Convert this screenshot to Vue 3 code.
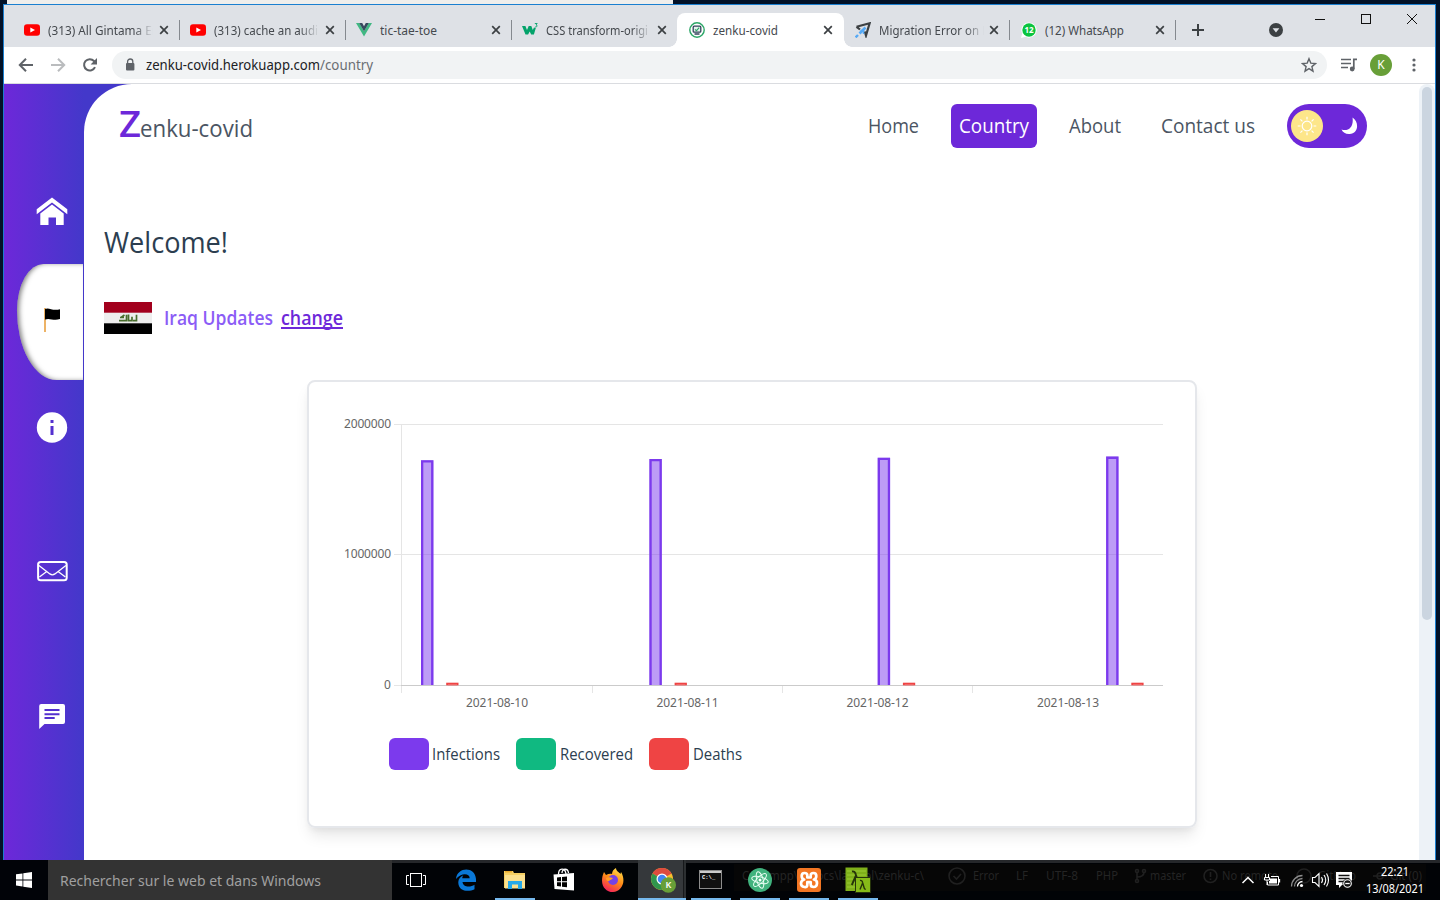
<script setup>
import { h } from 'vue'

// Single line of text set to a fixed advance width, optically centred on its capitals.
const FitText = (props) => {
  const s = Number(props.size)
  return h('svg', { width: props.w, height: s * 1.4, class: 'fit' }, [
    h('text', {
      x: 0,
      y: Math.round(s * 1.055),
      'font-size': s,
      fill: 'currentColor',
      textLength: props.w,
      lengthAdjust: 'spacingAndGlyphs'
    }, props.t)
  ])
}
FitText.props = ['t', 'w', 'size']

const tabs = [
  { t: '(313) All Gintama En', w: 111, icon: 'yt', fade: true },
  { t: '(313) cache an audi', w: 104, icon: 'yt', fade: true },
  { t: 'tic-tae-toe', w: 57, icon: 'vue' },
  { t: 'CSS transform-origi', w: 102, icon: 'w3', fade: true, noSep: true },
  { t: 'zenku-covid', w: 65, icon: 'covid', active: true, noSep: true },
  { t: 'Migration Error on L', w: 109, icon: 'plane', fade: true },
  { t: '(12) WhatsApp', w: 79, icon: 'wa' }
]
const links = [
  { t: 'Home', w: 51 },
  { t: 'Country', w: 70, active: true },
  { t: 'About', w: 52 },
  { t: 'Contact us', w: 94 }
]
const bars = [
  { x: 421, y: 460.3, d: '2021-08-10', l: 466 },
  { x: 649.4, y: 459, d: '2021-08-11', l: 656.5 },
  { x: 877.7, y: 457.8, d: '2021-08-12', l: 846.5 },
  { x: 1106.1, y: 456.6, d: '2021-08-13', l: 1037 }
]
const legend = [
  { t: 'Infections', w: 68, c: 'violet' },
  { t: 'Recovered', w: 73, c: 'green' },
  { t: 'Deaths', w: 49, c: 'red' }
]
const ghosts = [
  { t: 'C:\\xampp\\htdocs\\laravel\\zenku-c\\', x: 742, w: 182 },
  { t: 'Error', x: 973, w: 26 },
  { t: 'LF', x: 1016, w: 12 },
  { t: 'UTF-8', x: 1046, w: 32 },
  { t: 'PHP', x: 1096, w: 22 },
  { t: 'master', x: 1150, w: 36 },
  { t: 'No remote', x: 1222, w: 56 },
  { t: 'GitHub', x: 1318, w: 38 },
  { t: 'Git (0)', x: 1390, w: 32 }
]
const rays = [0, 45, 90, 135, 180, 225, 270, 315]
</script>

<template>
  <div class="screen">
    <div class="behind"></div>
    <div class="window">
      <div class="tabstrip">
        <div class="tabs">
          <div v-for="(b, i) in tabs" :key="i" class="tab" :class="{ active: b.active, sep: !b.noSep }">
            <svg class="fav" width="16" height="16" viewBox="0 0 16 16">
              <template v-if="b.icon === 'yt'">
                <rect x="0" y="2.2" width="16" height="11.6" rx="3" fill="#f00" />
                <path d="M6.3 5.4v5.2L11 8z" fill="#fff" />
              </template>
              <template v-else-if="b.icon === 'vue'">
                <path d="M0 1h3.3L8 9.2 12.7 1H16L8 14.6z" fill="#41b883" />
                <path d="M3.2 1h3L8 4.2 9.8 1h3L8 9.3z" fill="#35495e" />
              </template>
              <template v-else-if="b.icon === 'w3'">
                <path d="M0 4h3.400l1.600 4 1.700-4h2.600l1.500 4 1.200-2.400 1.800.4-1.900 6.600h-2.700L7.700 9.400l-1.600 3.200H3.500z" fill="#04a36b" />
                <path d="M12.800 1.500h2.400l-1.200 1.500c1.600.1 1.500 2.200-.9 2" fill="none" stroke="#04a36b" stroke-width=".9" />
              </template>
              <template v-else-if="b.icon === 'covid'">
                <circle cx="8" cy="8" r="7.2" fill="#fff" stroke="#2ca667" stroke-width="1.4" />
                <rect x="4.2" y="4.2" width="7.6" height="6" rx="1" fill="#e7f2ee" stroke="#33425b" stroke-width="1.3" />
                <path d="M5.5 12h5" stroke="#33425b" stroke-width="1.5" />
                <path d="M6 7.3l1.5 1.4 2.7-3" fill="none" stroke="#2ca667" stroke-width="1.1" />
              </template>
              <template v-else-if="b.icon === 'plane'">
                <path d="M1.500 4.800L14.600 1.300 11 13.500 9.800 9.500M1.500 4.800L5 7.500" fill="none" stroke="#3c4043" stroke-width="2.200" />
                <path d="M10.500 5.500L4.500 11.500" stroke="#56a9f5" stroke-width="2.600" /><path d="M5.500 8.500h3v3.500" fill="none" stroke="#56a9f5" stroke-width="1.500" />
                <path d="M3 13L.6 15.400" stroke="#56a9f5" stroke-width="2.400" />
              </template>
              <template v-else>
                <path d="M8 .4a7.6 7.6 0 1 1-3.3 14.4L0 16l1.2-4.6A7.6 7.6 0 0 1 8 .4z" fill="#fff" />
                <circle cx="8" cy="8" r="6.7" fill="#0ac43f" />
                <text x="8" y="11" font-size="8" font-weight="700" text-anchor="middle" fill="#fff">12</text>
              </template>
            </svg>
            <div class="title" :class="{ fade: b.fade }"><FitText :t="b.t" :w="b.w" size="12" /></div>
            <svg class="close" width="10" height="10" viewBox="0 0 10 10"><path d="M1.2 1.2l7.6 7.6M8.8 1.2L1.2 8.8" stroke="#3c4043" stroke-width="1.7" /></svg>
          </div>
        </div>
        <svg class="plus" width="12" height="12" viewBox="0 0 12 12"><path d="M6 0v12M0 6h12" stroke="#3c4043" stroke-width="2" /></svg>
        <svg class="drop" width="14" height="14" viewBox="0 0 14 14"><circle cx="7" cy="7" r="7" fill="#3c4043" /><path d="M3.6 5.2h6.8L7 9.6z" fill="#dee1e6" /></svg>
        <svg class="controls" width="106" height="14" viewBox="0 0 106 14" fill="none" stroke="#111" stroke-width="1">
          <path d="M1 7.5h10" /><rect x="47.5" y="2.5" width="9" height="9" /><path d="M93 2l10 10M103 2L93 12" />
        </svg>
      </div>

      <div class="toolbar">
        <svg class="navicons" width="84" height="20" viewBox="15 55 84 20" fill="none" stroke-width="2">
          <path d="M33 65H20M26 58.8L19.8 65l6.2 6.2" stroke="#5f6368" />
          <path d="M51 65h13M58 58.8l6.2 6.2-6.2 6.2" stroke="#babcbe" />
          <path d="M95 67.2A5.7 5.7 0 1 1 94 61l1.5 1.6" stroke="#5f6368" />
          <path d="M97 58v6.4h-6.4z" fill="#5f6368" />
        </svg>
        <div class="omni">
          <svg width="10" height="14" viewBox="0 0 10 14"><rect x="1" y="5" width="8.4" height="7.6" rx="1" fill="#5f6368" /><path d="M2.6 5.5V3.6a2.6 2.6 0 0 1 5.2 0v2" fill="none" stroke="#5f6368" stroke-width="1.3" /></svg>
          <div class="url"><FitText t="zenku-covid.herokuapp.com" w="174" size="14" /><FitText class="path" t="/country" w="53" size="14" /></div>
          <svg class="star" width="16" height="16" viewBox="0 0 16 16"><path d="M8 1.7l1.8 4.4 4.7.4-3.6 3.1 1.1 4.6L8 11.7l-4 2.5 1.1-4.6-3.6-3.1 4.7-.4z" fill="none" stroke="#5f6368" stroke-width="1.4" /></svg>
        </div>
        <svg class="media" width="17" height="14" viewBox="0 0 17 14"><path d="M0 1.5h10M0 5.5h10M0 9.5h7" stroke="#5f6368" stroke-width="1.7" /><path d="M12.8 11V1.4H16" fill="none" stroke="#5f6368" stroke-width="1.7" /><circle cx="11.2" cy="11" r="2.4" fill="#5f6368" /></svg>
        <div class="avatar">K</div>
        <svg class="dots" width="4" height="14" viewBox="0 0 4 14" fill="#5f6368"><circle cx="2" cy="2" r="1.6" /><circle cx="2" cy="7" r="1.6" /><circle cx="2" cy="12" r="1.6" /></svg>
      </div>

      <div class="viewport">
        <aside class="side">
          <div class="item i1"><svg width="32" height="30" viewBox="36 197 32 30"><path d="M52 197.5l15.300 11.700v5L52 202.5l-15.300 11.700v-5z" fill="#fff" /><path d="M40.300 213.500L52 204.600l11.700 8.900V225H56v-7.500h-7.500v7.500h-8.200z" fill="#fff" /></svg></div>
          <div class="item i2"><svg width="18" height="26" viewBox="43 307 18 26"><path d="M45 308v24" stroke="#e9a040" stroke-width="1.6" /><path d="M45 309c4-2 7 2.2 15 .3v9.8c-7 2-10-1.5-15 .4z" fill="#000" /></svg></div>
          <div class="item i3"><svg width="32" height="32" viewBox="0 0 32 32"><circle cx="16" cy="16.500" r="15.200" fill="#fff" /><path d="M16 9v2.900M16 15v9" stroke="#5430cf" stroke-width="3" /></svg></div>
          <div class="item i4"><svg width="32" height="22" viewBox="35.600 560 32 22" fill="none" stroke="#fff"><rect x="37.700" y="562" width="28.600" height="18.300" rx="2.600" stroke-width="2" /><path d="M38.500 565.500l11 8.400q2.500 1.800 5 0l11-8.400M39 577l7-5.300M65 577l-7-5.300" stroke-width="1.300" /></svg></div>
          <div class="item i5"><svg width="28" height="28" viewBox="38 702 28 28"><path d="M41 704h22q2 0 2 2v16q0 2-2 2H44.500l-5.300 5V706q0-2 2-2z" fill="#fff" /><path d="M44.500 710h15M44.500 714.200h15M44.500 718h10.200" stroke="#5430cf" stroke-width="2" /></svg></div>
        </aside>
        <div class="mainwrap">
          <main class="main">
            <header class="head">
              <svg class="logo" width="134" height="44" viewBox="119 104 134 44">
                <text class="z" x="119" y="137" font-size="36" textLength="22" lengthAdjust="spacingAndGlyphs">Z</text>
                <text class="rest" x="140" y="137" font-size="24" textLength="113" lengthAdjust="spacingAndGlyphs">enku-covid</text>
              </svg>
              <nav class="nav">
                <a v-for="l in links" :key="l.t" class="link" :class="{ on: l.active }"><FitText :t="l.t" :w="l.w" size="20" /></a>
                <div class="toggle">
                  <div class="knob">
                    <svg width="20" height="20" viewBox="-10 -10 20 20" fill="none" stroke="#fff" stroke-width="1.200">
                      <circle r="4.800" /><path v-for="r in rays" :key="r" d="M0 -6.500V-9.300" :transform="`rotate(${r})`" />
                    </svg>
                  </div>
                  <svg width="18" height="18" viewBox="0 0 18 18"><path d="M11.500 0.500c7 4.500 6 16-3 16.500-4 .2-6.500-1.500-8-4.500 7 2.500 12.500-3 11-12z" fill="#fff" /></svg>
                </div>
              </nav>
            </header>
            <h1 class="welcome"><FitText t="Welcome!" w="124" size="30" /></h1>
            <div class="country">
              <svg width="48" height="32" viewBox="0 0 48 32">
                <rect width="48" height="32" fill="#eee" /><rect width="48" height="10.700" fill="#a2001d" /><rect y="21.300" width="48" height="10.700" fill="#000" />
                <path d="M15 18.700h7.500v-6M17 15.500l3.500-2.500M16 15.500h4M24.500 12.500v6.200h3.500v-4M29 18.700h3.500v-6M28 16v2.700" fill="none" stroke="#496e2d" stroke-width="1.700" />
              </svg>
              <FitText class="upd" t="Iraq Updates" w="109" size="20" />
              <a class="change"><FitText t="change" w="62" size="20" /></a>
            </div>
            <section class="card">
              <svg class="chart" width="886" height="340" viewBox="309 382 886 340">
                <path d="M394 424.500H1163M394 554.500H1163M394 685.500H401M401.500 424V693M592.500 686v7M782.500 686v7M972.500 686v7" stroke="#e5e5e5" />
                <path d="M401 685.500H1163" stroke="#cbcbcb" />
                <g class="axis">
                  <text x="344" y="428" textLength="47">2000000</text>
                  <text x="344" y="558" textLength="47">1000000</text>
                  <text x="384" y="689" textLength="7">0</text>
                  <text v-for="b in bars" :key="b.d" :x="b.l" y="707" textLength="62">{{ b.d }}</text>
                </g>
                <g v-for="b in bars" :key="b.x">
                  <rect :x="b.x" :y="b.y" width="12.400" :height="685 - b.y" fill="#7c3aed" fill-opacity=".5" />
                  <path :d="`M${b.x + 1.15} 685V${b.y + 1.15}h10.1V685`" fill="none" stroke="#7c3aed" stroke-width="2.300" />
                  <rect :x="b.x + 25.200" y="682.700" width="12.300" height="2.600" fill="#ef4444" />
                  <rect :x="b.x + 27" y="684.200" width="9" height="1" fill="#f27070" />
                </g>
              </svg>
              <div class="legend">
                <div v-for="l in legend" :key="l.t" class="key"><i :class="l.c"></i><FitText :t="l.t" :w="l.w" size="16" /></div>
              </div>
            </section>
          </main>
        </div>
        <div class="scroll"><div class="thumb"></div></div>
      </div>
    </div>

    <footer class="taskbar">
      <svg class="ghost" width="694" height="28" viewBox="734 863 694 28">
        <rect x="734" y="864" width="692" height="27" fill="#060606" />
        <text v-for="g in ghosts" :key="g.t" :x="g.x" y="880" font-size="12" :textLength="g.w" lengthAdjust="spacingAndGlyphs">{{ g.t }}</text>
        <g fill="none" stroke="#202020" stroke-width="1.600"><circle cx="957" cy="876" r="8" /><path d="M953.500 876l3 3 4.500-5" /><circle cx="1210.500" cy="876" r="6.500" /><path d="M1210.500 872v5M1210.500 878.500v1.500M1137 872v8M1144 872q0 5-7 5" /><circle cx="1137" cy="871" r="1.500" /><circle cx="1144" cy="871" r="1.500" /><circle cx="1137" cy="881" r="1.500" /><circle cx="1304" cy="876" r="7" /><path d="M1373 876h14" /><circle cx="1380" cy="876" r="3" /></g>
      </svg>
      <div class="start"><svg width="16" height="16" viewBox="0 0 16 16" fill="#fff"><path d="M0 2.300l6.500-.9v6.100H0zM7.300 1.200L16 0v7.500H7.300zM0 8.400h6.500v6.100L0 13.600zM7.300 8.400H16V16l-8.700-1.200z" /></svg></div>
      <div class="search"><FitText t="Rechercher sur le web et dans Windows" w="261" size="15" /></div>
      <div class="slot view"><svg width="20" height="14" viewBox="0 0 20 14" fill="none" stroke="#fff"><rect x="4.500" y=".5" width="11" height="13" /><path d="M3 2.500H.5v9H3M17 2.500h2.500v9H17" /></svg></div>
      <div class="slot"><svg width="22" height="22" viewBox="0 0 22 22"><path d="M1 10C2-2 20-3 21 10v3H7.500c.5 5.500 8 5.500 12 2.800v4.400C13 23.500 3 22 3.300 13c.2-3 2-5.500 5-6.700C7.500 7.500 7.300 8.500 7.300 9.300h7.400c0-5.500-9-5.500-13.700.7z" fill="#0a78d7" /></svg></div>
      <div class="slot run"><svg width="22" height="20" viewBox="0 0 22 20"><path d="M0 1h9l1 2h11v15H0z" fill="#f5cf63" /><path d="M1 5h20v13.500H1z" fill="#fbe08e" /><path d="M4 19v-8h14v8h-4v-4.500H8V19z" fill="#27a9e8" /><path d="M1 1h7v1.500H1z" fill="#e8a92d" /></svg></div>
      <div class="slot"><svg width="22" height="24" viewBox="0 0 22 24"><path d="M0.500 6.500L21 5v17.500L1.500 21z" fill="#fff" /><path d="M5.500 6.500C5.500-.5 12-.5 13 6M9 5c0-5 6-5 6.500 0" fill="none" stroke="#fff" stroke-width="1.300" /><path d="M4 9.500l4-.4v4.200H4zM9 9l5-.5v4.800H9zM4 14.300h4v4.200l-4-.4zM9 14.300h5v4.900l-5-.5z" fill="#000" /></svg></div>
      <div class="slot"><svg width="24" height="24" viewBox="0 0 24 24"><defs><linearGradient id="ff" x1=".8" y1="0" x2=".3" y2="1"><stop offset="0" stop-color="#ffe14a" /><stop offset=".5" stop-color="#ff8a16" /><stop offset="1" stop-color="#f3205b" /></linearGradient></defs><path d="M3 4l2 3c2-1 4-1.500 6-1C11 3 13 1 15 0c0 3 3 4 4.500 6l.5-2c6 10 0 20-8 20C3 24-2 15 3 4z" fill="url(#ff)" /><circle cx="12" cy="12" r="5" fill="#7542e5" /><path d="M5 10c3-1.500 5 0 7 0-1 2-3 1.500-4 3-2 .5-3-1-3-3z" fill="#ff9d22" /></svg></div>
      <div class="slot run chrome"><svg width="26" height="26" viewBox="0 0 26 26"><circle cx="12" cy="12" r="11" fill="#f9bf2d" /><path d="M12 12L2.500 6.500A11 11 0 0 1 21.600 6.600z" fill="#dd4b3e" /><path d="M12 12L2.500 6.500A11 11 0 0 0 12 23z" fill="#30964d" /><circle cx="12" cy="12" r="5.500" fill="#fff" /><circle cx="12" cy="12" r="4.300" fill="#4285f4" /><circle cx="18.300" cy="18" r="7.700" fill="#689f38" /><text x="18.300" y="21.300" font-size="9" font-weight="600" fill="#fff" text-anchor="middle">K</text></svg></div>
      <div class="slot run"><svg width="24" height="20" viewBox="0 0 24 20"><rect x=".5" y=".5" width="22" height="18" fill="#111" stroke="#8c8c8c" /><path d="M1 2h21" stroke="#ccc" stroke-width="2" /><text x="3" y="9" font-size="5.500" font-weight="700" fill="#fff" class="mono">C:\_</text></svg></div>
      <div class="slot run"><svg width="24" height="24" viewBox="-12 -12 24 24"><circle r="12" fill="#40b27d" /><g fill="none" stroke="#eafff5" stroke-width="1"><ellipse rx="3.200" ry="8.500" transform="rotate(-15)" /><ellipse rx="3.200" ry="8.500" transform="rotate(45)" /><ellipse rx="3.200" ry="8.500" transform="rotate(105)" /></g><circle r="1.500" fill="#fff" /></svg></div>
      <div class="slot run"><svg width="24" height="24" viewBox="0 0 24 24"><rect width="24" height="24" rx="3" fill="#f37623" /><path d="M10.300 9.500V7.200Q10.300 5 7.500 5T4.700 8t2.500 3.500Q4 12.500 4 15.500T7.300 19t3-2.500v-2.300h3.400v2.300q0 2.500 3 2.500t3.300-3.500-3.200-4q2.500-.5 2.500-3.500t-2.800-3-2.800 2.200v2.300z" fill="none" stroke="#fff" stroke-width="2.700" stroke-linejoin="round" /></svg></div>
      <div class="slot run"><svg width="26" height="26" viewBox="0 0 26 26"><rect x=".5" y=".5" width="22" height="23.500" fill="#7fb01a" /><path d="M2 4h19M2 8h19M2 12h19M2 16h19M2 20h19" stroke="#9ccb35" /><path d="M7 4.500q3-.8 4 3.500l2.500 9q.5 1.500 2 1M11 8.500L6.800 18" fill="none" stroke="#26340a" stroke-width="1.900" /><rect x="10.500" y="10.500" width="15" height="15" fill="#86bb18" stroke="#26340a" /><path d="M15 13.500q2-.5 2.600 2l1.600 5.500q.4 1.500 1.600 1M17.600 16L15 22.500" fill="none" stroke="#26340a" stroke-width="1.400" /></svg></div>
      <div class="tray">
        <svg width="114" height="24" viewBox="1240 868 114 24" fill="none" stroke="#fff" stroke-width="1.300">
          <path d="M1242.500 883l5.500-5.500 5.500 5.500" stroke-width="1.500" />
          <path d="M1271 876.500h7.500v8.500h-11v-3" stroke-width="1" /><path d="M1270 878.500h7v5h-8v-2.500h1z" fill="#fff" stroke="none" /><path d="M1279.500 879v3.500" /><path d="M1265.500 874v3M1268.500 874v3M1264.500 877.500h5v2.500h-5zM1267 880v5" stroke-width="1" />
          <path d="M1291.500 886.500a11 11 0 0 1 11-11M1294.500 886.500a8 8 0 0 1 8-8" stroke="#8b8b8b" /><path d="M1297.500 886.500a5 5 0 0 1 5-5" /><circle cx="1301.500" cy="885.500" r="1.600" fill="#fff" stroke="none" />
          <path d="M1312.500 877.500h2.500l4-4v13l-4-4h-2.500zM1321.500 877q2 3 0 6M1324 875q3.500 5 0 10M1326.500 873.500q4 6.500 0 13" stroke-width="1.100" />
          <path d="M1336 872h16v13h-10l-3 3v-3h-3z" fill="#fff" stroke="none" /><path d="M1338.500 875.500h11M1338.500 878.500h11M1338.500 881.500h5" stroke="#111" /><circle cx="1347.500" cy="883.500" r="4.600" fill="#111" stroke="#111" stroke-width="1" /><circle cx="1347.500" cy="883.500" r="3.800" stroke-width="1.100" /><path d="M1345.300 883.500h4.400" />
        </svg>
      </div>
      <div class="clock"><FitText t="22:21" w="28" size="12" /><FitText t="13/08/2021" w="58" size="12" /></div>
    </footer>
  </div>
</template>

<style>
html, body { margin: 0; overflow: hidden; background: #020b20; }
.fit { display: block; flex: none; overflow: visible; }
</style>

<style scoped>
.screen { position: relative; width: 1440px; height: 900px; overflow: hidden; background: #021127; font-family: "Noto Sans", "Open Sans", sans-serif; display: flex; flex-direction: column; }
.screen * { box-sizing: border-box; }
svg { display: block; flex: none; }
.behind { height: 4px; margin-left: 7px; width: 666px; background: #efeeec; }
.window { width: 1433px; height: 856px; margin-left: 3px; border: 1px solid #1a7fd0; border-bottom: 0; background: #fff; display: flex; flex-direction: column; }
.tabstrip { height: 42px; background: #dee1e6; display: flex; align-items: flex-end; padding-left: 9px; }
.tabs { display: flex; }
.tab { position: relative; width: 166px; height: 34px; display: flex; align-items: center; padding: 0 10px 0 11px; color: #45494e; }
.tab.sep::after { content: ""; position: absolute; right: -1px; top: 7px; width: 1px; height: 20px; background: #85898f; }
.tab.active { background: #fff; border-radius: 8px 8px 0 0; padding-left: 12px; width: 167px; margin-right: -1px; }
.tab.active::before, .tab.active::after { content: ""; position: absolute; bottom: 0; width: 8px; height: 8px; }
.tab.active::before { left: -8px; background: radial-gradient(circle at 0 0, transparent 7.5px, #fff 8px); }
.tab.active::after { right: -8px; background: radial-gradient(circle at 100% 0, transparent 7.5px, #fff 8px); }
.tab.active ~ .tab { padding-left: 12px; }
.tab.active .close, .tab.active ~ .tab .close { margin-left: 5px; }
.title { width: 105px; margin-left: 8px; overflow: hidden; }
.fade { -webkit-mask-image: linear-gradient(90deg, #000 82%, transparent 100%); mask-image: linear-gradient(90deg, #000 82%, transparent 100%); }
.close { margin-left: 6px; }
.plus { margin: 0 0 11px 17px; }
.drop { margin: 0 0 10px 65px; }
.controls { align-self: flex-start; margin: 7px 0 0 31px; }
.toolbar { height: 37px; border-bottom: 1px solid #dadce0; display: flex; align-items: center; }
.navicons { margin-left: 11px; }
.omni { margin-left: 13px; width: 1215px; height: 28px; border-radius: 14px; background: #f1f3f4; display: flex; align-items: center; padding: 0 10px 0 13px; }
.url { display: flex; margin-left: 11px; color: #202124; }
.path { color: #6a6e73; }
.star { margin-left: auto; }
.media { margin-left: 14px; }
.avatar { margin-left: 12px; width: 22px; height: 22px; border-radius: 50%; background: #689f38; color: #fff; font-size: 12px; line-height: 22px; text-align: center; }
.dots { margin-left: 19.5px; }
.viewport { height: 776px; display: flex; }
.side { width: 80px; padding-top: 76px; background: linear-gradient(90deg, #6d28d9, #4338ca); display: flex; flex-direction: column; align-items: flex-end; }
.item { width: 66px; margin-right: 1px; display: flex; align-items: center; justify-content: center; padding-left: 4px; }
.i1 { height: 104px; }
.i2 { height: 116px; background: #fff; border-radius: 40% 0 0 60%; box-shadow: inset 3px 0 5px -1px rgba(0, 0, 0, .5); padding-bottom: 4px; }
.i3 { height: 94px; }
.i4 { height: 194px; }
.i5 { height: 96px; }
.mainwrap { width: 1335px; background: linear-gradient(90deg, #4338ca 100px, #fff 100px); }
.main { height: 776px; background: #fff; border-radius: 48px 0 0 0; overflow: hidden; font-family: "Open Sans", "Noto Sans", sans-serif; }
.head { height: 84px; padding: 0 52px 0 35px; display: flex; align-items: center; justify-content: space-between; }
.z { fill: #6d28d9; font-weight: 600; }
.rest { fill: #4b5563; }
.nav { display: flex; gap: 24px; }
.link { height: 44px; padding: 0 8px; border-radius: 6px; color: #4b5563; display: flex; align-items: center; }
.link.on { background: #6d28d9; color: #fff; }
.toggle { width: 80px; height: 44px; border-radius: 22px; background: #6d28d9; display: flex; align-items: center; justify-content: space-between; padding: 0 8px 0 4px; }
.knob { width: 32px; height: 32px; border-radius: 50%; background: #fde68a; display: flex; align-items: center; justify-content: center; }
.welcome { margin: 53px 0 0 20px; height: 42px; font-weight: 400; color: #2c3e50; }
.country { margin: 39px 0 0 20px; height: 32px; display: flex; align-items: center; }
.upd { margin-left: 12px; color: #8b5cf6; font-weight: 600; }
.change { margin-left: 8px; color: #6d28d9; font-weight: 600; background: linear-gradient(currentColor, currentColor) 0 23px / 100% 2px no-repeat; }
.card { margin: 46px 0 0 223px; width: 890px; height: 448px; border: 2px solid #e5e7eb; border-radius: 8px; box-shadow: 0 10px 15px -3px rgba(0, 0, 0, .1), 0 4px 6px -2px rgba(0, 0, 0, .05); }
.axis { font-family: "Noto Sans", sans-serif; font-size: 12px; fill: #666; }
.legend { display: flex; gap: 16px; margin: 16px 0 0 80px; color: #2c3e50; font-weight: 400; }
.key { display: flex; align-items: center; gap: 4px; }
.key:first-child { gap: 3px; }
.key i { width: 40px; height: 32px; border-radius: 6px; }
.violet { background: #7c3aed; }
.green { background: #10b981; }
.red { background: #ef4444; }
.scroll { width: 16px; background: #edf2f7; border-radius: 8px 8px 0 0; padding: 3px; }
.thumb { width: 10px; height: 533px; border-radius: 5px; background: #cbd5e0; }
.taskbar { position: relative; height: 40px; background: #010306; border-top: 3px solid #25272a; display: flex; }
.taskbar > * { position: relative; }
.taskbar > .ghost { position: absolute; left: 734px; top: 0; }
.ghost text { fill: #242424; }
.start { width: 48px; margin-top: -3px; height: 40px; background: #010308; display: flex; align-items: center; justify-content: center; }
.search { width: 344px; margin-top: -3px; height: 40px; background: #333; color: #a0a0a0; display: flex; align-items: center; padding-left: 12px; }
.slot { width: 49px; height: 40px; margin-top: -3px; display: flex; align-items: center; justify-content: center; }
.run::after { content: ""; position: absolute; left: 5px; bottom: 0; width: 40px; height: 2px; background: #76b9ed; }
.chrome { background: linear-gradient(90deg, #35383b 45px, #17191b 45px, #17191b 46px, #2c2f31 46px); width: 48px; margin-left: 1px; padding-left: 2px; }
.chrome::after { left: 0; width: 48px; }
.view { width: 48px; margin-right: 1px; }
.tray { margin-left: 358px; padding-top: 5px; }
.clock { margin: -3px 0 0 12px; width: 58px; height: 40px; display: flex; flex-direction: column; align-items: center; justify-content: center; color: #fff; }
.mono { font-family: "Liberation Mono", monospace; }
</style>
